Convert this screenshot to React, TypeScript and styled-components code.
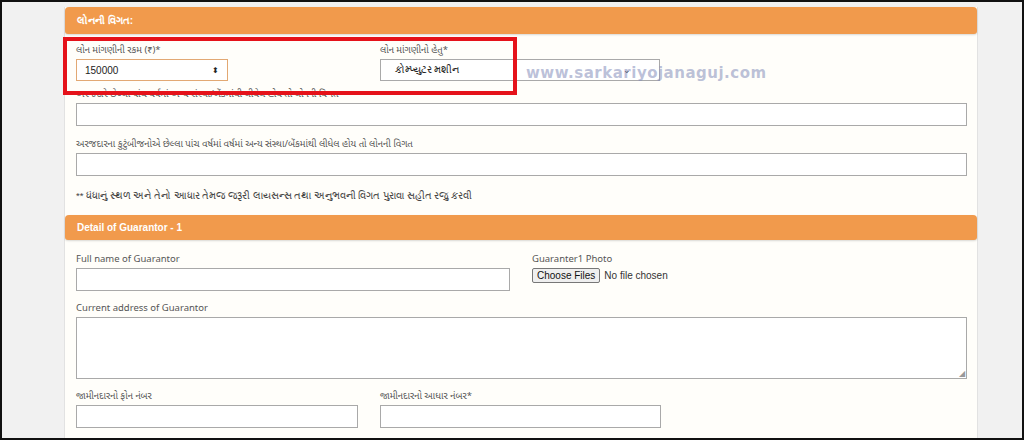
import React from "react";
import styled, { createGlobalStyle } from "styled-components";

const Global = createGlobalStyle`
  html, body { margin: 0; padding: 0; }
  body { font-family: "Liberation Sans", "Noto Sans", Arial, sans-serif; }
`;

const Frame = styled.div`
  width: 1024px; height: 440px; box-sizing: border-box;
  border: 2px solid #111; background: #f1f1f1; overflow: hidden;
  display: flex; justify-content: flex-start; padding: 5px 0 0 62px;
`;

const Panel = styled.div`
  position: relative;
  width: 912px; background: #fffefa; border-left: 1px solid #e2e2e2; border-right: 1px solid #e2e2e2;
  border-bottom: 3px solid #3d78c8; height: 440px;
`;

const Header = styled.div<{ $h: number }>`
  background: #f19a4c; border-radius: 4px 4px 3px 3px; height: ${p => p.$h}px;
  color: #fff; font-size: 10px; font-weight: bold; display: flex; align-items: center;
  padding-left: 12px; box-shadow: 0 1px 2px rgba(0,0,0,0.15);
`;

const Body = styled.div`
  padding: 8px 10px 10px 11px; display: flex; flex-direction: column;
`;

const Row = styled.div<{ $gap?: number; $mt?: number }>`
  display: flex; gap: ${p => p.$gap ?? 22}px; margin-top: ${p => p.$mt ?? 0}px;
`;

const Field = styled.div<{ $w?: number; $mt?: number }>`
  display: flex; flex-direction: column; width: ${p => (p.$w ? p.$w + "px" : "100%")};
  margin-top: ${p => p.$mt ?? 0}px;
`;

const Label = styled.div`
  font-size: 9.5px; color: #555; height: 12px; line-height: 12px; white-space: nowrap;
  font-family: "Noto Sans Gujarati", "Liberation Sans", sans-serif;
`;

const Input = styled.div<{ $h?: number; $orange?: boolean }>`
  box-sizing: border-box; height: ${p => p.$h ?? 23}px; width: 100%;
  border: 1px solid ${p => (p.$orange ? "#e2a873" : "#a9a9a9")}; background: #fff;
  display: flex; align-items: center; justify-content: space-between; padding: 0 8px;
  font-size: 10px; color: #222; margin-top: 2px; position: relative;
`;

const Resize = styled.span`
  position: absolute; right: 1px; bottom: 0; font-size: 8px; color: #999;
`;

const Note = styled.div`
  font-size: 9.5px; color: #444; margin-top: 14px; font-weight: normal;
`;

const FileBtn = styled.span`
  border: 1px solid #777; background: #efefef; border-radius: 2px; font-size: 10px; padding: 1px 4px; color: #111;
`;

const FileRow = styled.div`
  display: flex; align-items: center; gap: 4px; font-size: 10px; color: #333; margin-top: 2px;
`;

const RedBox = styled.div`
  position: absolute; left: -2px; top: 30px; width: 446px; height: 50px;
  border: 4px solid #e5121a;
`;

const Watermark = styled.div`
  position: absolute; left: 461px; top: 57px; font-size: 15px; font-weight: bold;
  color: rgba(130,140,185,0.55); letter-spacing: 0.5px; font-family: "DejaVu Sans", sans-serif;
`;

const Spin = styled.span`font-size: 8px;`;
const Chevron = styled.span`font-size: 9px; margin-right: 20px;`;

export default function App() {
  return (
    <>
      <Global />
      <Frame>
        <Panel>
          <Header $h={27}>લોનની વિગત:</Header>
          <Body>
            <Row $gap={152} $mt={3}>
              <Field $w={152}>
                <Label>લોન માંગણીની રકમ (₹)*</Label>
                <Input $h={22} $orange>150000<Spin>⬍</Spin></Input>
              </Field>
              <Field $w={280}>
                <Label>લોન માંગણીનો હેતુ*</Label>
                <Input $h={22}>&nbsp;&nbsp;કોમ્પ્યુટર મશીન<Chevron>⌄</Chevron></Input>
              </Field>
            </Row>
            <Field $mt={8}>
              <Label>અરજદારે છેલ્લા પાંચ વર્ષમાં અન્ય સંસ્થા/બેંકમાંથી લીધેલ હોય તો લોનની વિગત</Label>
              <Input />
            </Field>
            <Field $mt={13}>
              <Label>અરજદારના કુટુંબીજનોએ છેલ્લા પાંચ વર્ષમાં વર્ષમાં અન્ય સંસ્થા/બેંકમાંથી લીધેલ હોય તો લોનની વિગત</Label>
              <Input />
            </Field>
            <Note>** ધંધાનું સ્થળ અને તેનો આધાર તેમજ જરૂરી લાયસન્સ તથા અનુભવની વિગત પુરાવા સહીત રજુ કરવી</Note>
          </Body>
          <Field $mt={3}>
            <Header $h={25}>Detail of Guarantor - 1</Header>
          </Field>
          <Body style={{ paddingTop: 14 }}>
            <Row $gap={22}>
              <Field $w={434}>
                <Label>Full name of Guarantor</Label>
                <Input />
              </Field>
              <Field $w={250}>
                <Label>Guaranter1 Photo</Label>
                <FileRow><FileBtn>Choose Files</FileBtn>No file chosen</FileRow>
              </Field>
            </Row>
            <Field $mt={12}>
              <Label>Current address of Guarantor</Label>
              <Input $h={62}><Resize>◢</Resize></Input>
            </Field>
            <Row $gap={22} $mt={12}>
              <Field $w={282}>
                <Label>જામીનદારનો ફોન નંબર</Label>
                <Input />
              </Field>
              <Field $w={281}>
                <Label>જામીનદારનો આધાર નંબર*</Label>
                <Input />
              </Field>
            </Row>
          </Body>
          <RedBox />
          <Watermark>www.sarkariyojanaguj.com</Watermark>
        </Panel>
      </Frame>
    </>
  );
}
